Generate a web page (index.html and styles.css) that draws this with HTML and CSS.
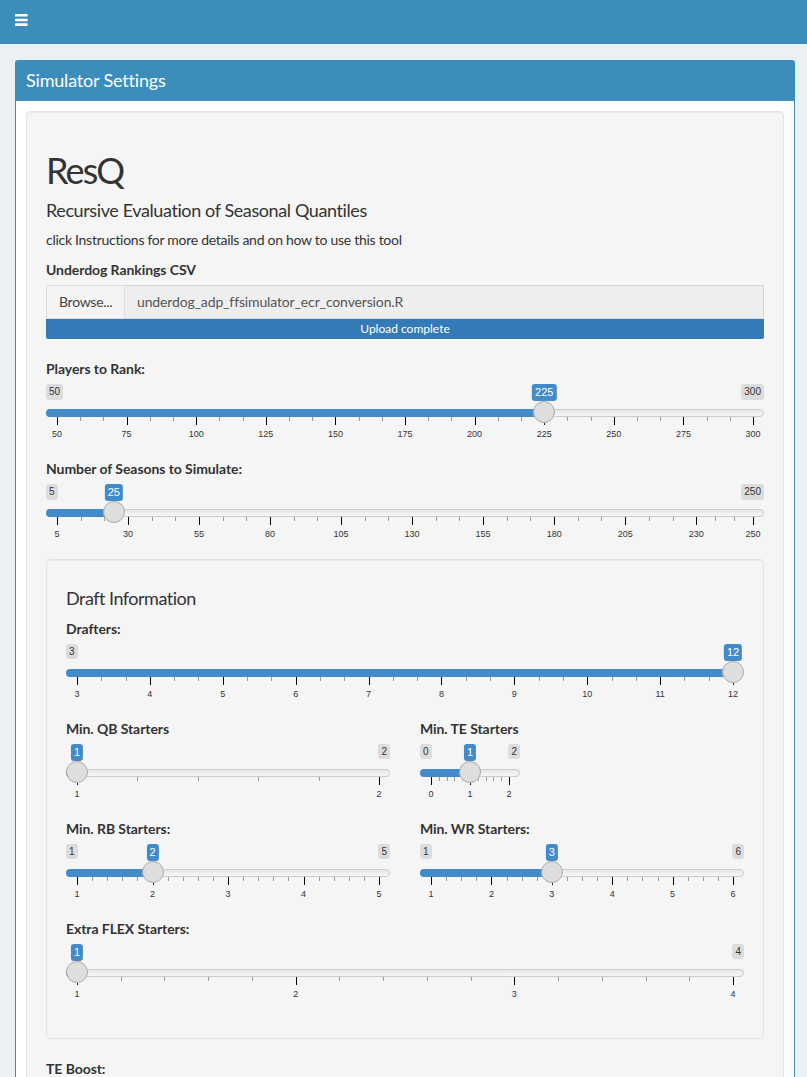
FILE: index.html
```html
<!DOCTYPE html>
<html lang="en">
<head>
<meta charset="utf-8">
<title>ResQ</title>
<link rel="stylesheet" href="styles.css">
</head>
<body>
<header class="main-header">
  <a class="sidebar-toggle" aria-label="Toggle navigation">
    <svg width="13" height="12" viewBox="0 0 13 12" aria-hidden="true">
      <rect x="0" y="0" width="12.7" height="2.6" rx="0.7"/>
      <rect x="0" y="4.7" width="12.7" height="2.6" rx="0.7"/>
      <rect x="0" y="9.3" width="12.7" height="2.6" rx="0.7"/>
    </svg>
  </a>
</header>

<div class="content">
  <section class="box">
    <div class="box-header"><h3 class="box-title">Simulator Settings</h3></div>
    <div class="box-body">
      <div class="well">
        <h1 class="app-title">ResQ</h1>
        <h4 class="subtitle">Recursive Evaluation of Seasonal Quantiles</h4>
        <p class="note">click Instructions for more details and on how to use this tool</p>

        <div class="form-group file-group">
          <label class="control-label">Underdog Rankings CSV</label>
          <div class="input-group">
            <span class="btn-browse">Browse...</span>
            <span class="file-name">underdog_adp_ffsimulator_ecr_conversion.R</span>
          </div>
          <div class="progress"><div class="progress-bar">Upload complete</div></div>
        </div>

        <div class="form-group">
          <label class="control-label">Players to Rank:</label>
          <div class="irs" style="--p:0.7" data-min="50" data-max="300" data-small="2" data-ticks="50,75,100,125,150,175,200,225,250,275,300">
            <span class="irs-line"></span><span class="irs-bar"></span><span class="irs-handle"></span>
            <span class="irs-min">50</span><span class="irs-max">300</span><span class="irs-single">225</span>
          </div>
        </div>

        <div class="form-group">
          <label class="control-label">Number of Seasons to Simulate:</label>
          <div class="irs" style="--p:0.08163" data-min="5" data-max="250" data-small="2" data-ticks="5,30,55,80,105,130,155,180,205,230,250">
            <span class="irs-line"></span><span class="irs-bar"></span><span class="irs-handle"></span>
            <span class="irs-min">5</span><span class="irs-max">250</span><span class="irs-single">25</span>
          </div>
        </div>

        <div class="well inner-well">
          <h4 class="subtitle">Draft Information</h4>

          <div class="form-group">
            <label class="control-label">Drafters:</label>
            <div class="irs" style="--p:1" data-min="3" data-max="12" data-small="2" data-ticks="3,4,5,6,7,8,9,10,11,12">
              <span class="irs-line"></span><span class="irs-bar"></span><span class="irs-handle"></span>
              <span class="irs-min">3</span><span class="irs-single">12</span>
            </div>
          </div>

          <div class="row">
            <div class="form-group">
              <label class="control-label">Min. QB Starters</label>
              <div class="irs" style="--p:0" data-min="1" data-max="2" data-small="4" data-ticks="1,2">
                <span class="irs-line"></span><span class="irs-bar"></span><span class="irs-handle"></span>
                <span class="irs-max">2</span><span class="irs-single">1</span>
              </div>
            </div>
            <div class="form-group">
              <label class="control-label">Min. TE Starters</label>
              <div class="irs narrow" style="--p:0.5" data-min="0" data-max="2" data-small="4" data-ticks="0,1,2">
                <span class="irs-line"></span><span class="irs-bar"></span><span class="irs-handle"></span>
                <span class="irs-min">0</span><span class="irs-max">2</span><span class="irs-single">1</span>
              </div>
            </div>
          </div>

          <div class="row">
            <div class="form-group">
              <label class="control-label">Min. RB Starters:</label>
              <div class="irs" style="--p:0.25" data-min="1" data-max="5" data-small="4" data-ticks="1,2,3,4,5">
                <span class="irs-line"></span><span class="irs-bar"></span><span class="irs-handle"></span>
                <span class="irs-min">1</span><span class="irs-max">5</span><span class="irs-single">2</span>
              </div>
            </div>
            <div class="form-group">
              <label class="control-label">Min. WR Starters:</label>
              <div class="irs" style="--p:0.4" data-min="1" data-max="6" data-small="3" data-ticks="1,2,3,4,5,6">
                <span class="irs-line"></span><span class="irs-bar"></span><span class="irs-handle"></span>
                <span class="irs-min">1</span><span class="irs-max">6</span><span class="irs-single">3</span>
              </div>
            </div>
          </div>

          <div class="form-group">
            <label class="control-label">Extra FLEX Starters:</label>
            <div class="irs" style="--p:0" data-min="1" data-max="4" data-small="4" data-ticks="1,2,3,4">
              <span class="irs-line"></span><span class="irs-bar"></span><span class="irs-handle"></span>
              <span class="irs-max">4</span><span class="irs-single">1</span>
            </div>
          </div>
        </div>

        <div class="form-group">
          <label class="control-label">TE Boost:</label>
        </div>
      </div>
    </div>
  </section>
</div>
<script src="script.js"></script>
</body>
</html>
```

FILE: styles.css
```css
* { box-sizing: border-box; }
html, body { margin: 0; padding: 0; }
body {
  background: #ecf0f5;
  font-family: Lato, "Open Sans", sans-serif;
  font-size: 14px;
  line-height: 1.42857;
  color: #333;
  letter-spacing: -0.02em;
  min-height: 1077px;
}

.main-header {
  height: 44px;
  background: #3c8dbc;
  padding: 14px 0 0 15px;
}
.sidebar-toggle svg { display: block; fill: #fff; }

.content { padding: 16px 12px 0 15px; }

.box {
  background: #fff;
  border: 1px solid #3c8dbc;
  border-top-width: 3px;
  border-radius: 3px;
  box-shadow: 0 1px 1px rgba(0,0,0,.1);
}
.box-header {
  background: #3c8dbc;
  color: #fff;
  padding: 8px 10px 12px;
}
.box-title {
  margin: 0;
  font-size: 18px;
  line-height: 1;
  font-weight: 400;
  letter-spacing: -0.01em;
}
.box-body { padding: 10px; }

.well {
  background: #f5f5f5;
  border: 1px solid #e3e3e3;
  border-radius: 4px;
  box-shadow: inset 0 1px 1px rgba(0,0,0,.05);
  padding: 19px;
  margin-bottom: 20px;
}

.app-title {
  margin: 20px 0 10px;
  font-size: 36px;
  line-height: 1.1;
  font-weight: 400;
  letter-spacing: -0.05em;
}
.subtitle {
  margin: 10px 0;
  font-size: 18px;
  line-height: 1.1;
  font-weight: 400;
  letter-spacing: -0.022em;
}
.inner-well .subtitle { letter-spacing: -0.028em; }
.note { margin: 0 0 10px; }

.form-group { margin-bottom: 15px; }
.file-group { margin-bottom: 20px; }
.control-label {
  display: inline-block;
  margin-bottom: 5px;
  font-weight: 700;
  letter-spacing: -0.005em;
}

.input-group { display: flex; height: 34px; }
.btn-browse {
  width: 79px;
  padding: 6px 12px;
  background: #f4f4f4;
  border: 1px solid #ddd;
  color: #444;
}
.file-name {
  flex: 1;
  padding: 6px 12px;
  background: #eee;
  border: 1px solid #d2d6de;
  border-left: none;
  color: #555;
  letter-spacing: -0.01em;
}
.progress {
  height: 20px;
  background: #f5f5f5;
  border-radius: 0 0 2px 2px;
  overflow: hidden;
}
.progress-bar {
  height: 100%;
  background: #337ab7;
  color: #fff;
  font-size: 12px;
  line-height: 20px;
  text-align: center;
  letter-spacing: 0;
}

.row {
  display: grid;
  grid-template-columns: 1fr 1fr;
  column-gap: 30px;
}

/* ion range slider, shiny skin */
.irs {
  position: relative;
  height: 60px;
  font-family: "Liberation Sans", Arial, sans-serif;
  letter-spacing: 0;
}
.irs.narrow { width: 100px; }
.irs-line {
  position: absolute;
  left: 0; right: 0; top: 25px;
  height: 8px;
  border: 1px solid #ccc;
  border-radius: 8px;
  background: linear-gradient(to bottom, #dedede -50%, #fff 150%);
}
.irs-bar {
  position: absolute;
  left: 0; top: 25px;
  height: 8px;
  width: calc(11px + (100% - 22px) * var(--p));
  background: #428bca;
  border-radius: 8px 0 0 8px;
}
.irs-handle {
  position: absolute;
  top: 17px;
  left: calc((100% - 22px) * var(--p));
  width: 22px; height: 22px;
  border: 1px solid #ababab;
  background: #dedede;
  border-radius: 50%;
  box-shadow: 1px 1px 3px rgba(255,255,255,.3);
  z-index: 1;
}
.irs-min, .irs-max, .irs-single {
  position: absolute;
  top: 0;
  padding: 1px 3px;
  line-height: 1.333;
  border-radius: 3px;
  white-space: nowrap;
}
.irs-min, .irs-max {
  font-size: 10px;
  color: #333;
  background: rgba(0,0,0,.1);
}
.irs-min { left: 0; }
.irs-max { right: 0; }
.irs-single {
  left: calc(11px + (100% - 22px) * var(--p));
  transform: translateX(-50%);
  font-size: 11px;
  color: #fff;
  background: #428bca;
}
.irs-grid {
  position: absolute;
  left: 11px; right: 11px; bottom: 0;
  height: 27px;
}
.irs-grid-pol {
  position: absolute;
  top: 0;
  width: 1px;
  height: 8px;
  background: #000;
}
.irs-grid-pol.small { height: 4px; background: #999; }
.irs-grid-text {
  position: absolute;
  bottom: 5px;
  font-size: 9px;
  line-height: 9px;
  color: #333;
  white-space: nowrap;
  transform: translateX(-50%);
}
```

FILE: script.js
```js
document.querySelectorAll('.irs').forEach(function (el) {
  var min = +el.dataset.min, max = +el.dataset.max;
  var small = +el.dataset.small;
  var ticks = el.dataset.ticks.split(',').map(Number);
  var grid = document.createElement('div');
  grid.className = 'irs-grid';
  var prev = null;
  ticks.forEach(function (v) {
    var p = (v - min) / (max - min) * 100;
    if (prev !== null) {
      for (var z = 1; z <= small; z++) {
        var s = document.createElement('span');
        s.className = 'irs-grid-pol small';
        s.style.left = (p - (p - prev) * z / (small + 1)) + '%';
        grid.appendChild(s);
      }
    }
    var b = document.createElement('span');
    b.className = 'irs-grid-pol';
    b.style.left = p + '%';
    grid.appendChild(b);
    var t = document.createElement('span');
    t.className = 'irs-grid-text';
    t.style.left = p + '%';
    t.textContent = v;
    grid.appendChild(t);
    prev = p;
  });
  el.appendChild(grid);
});
```
